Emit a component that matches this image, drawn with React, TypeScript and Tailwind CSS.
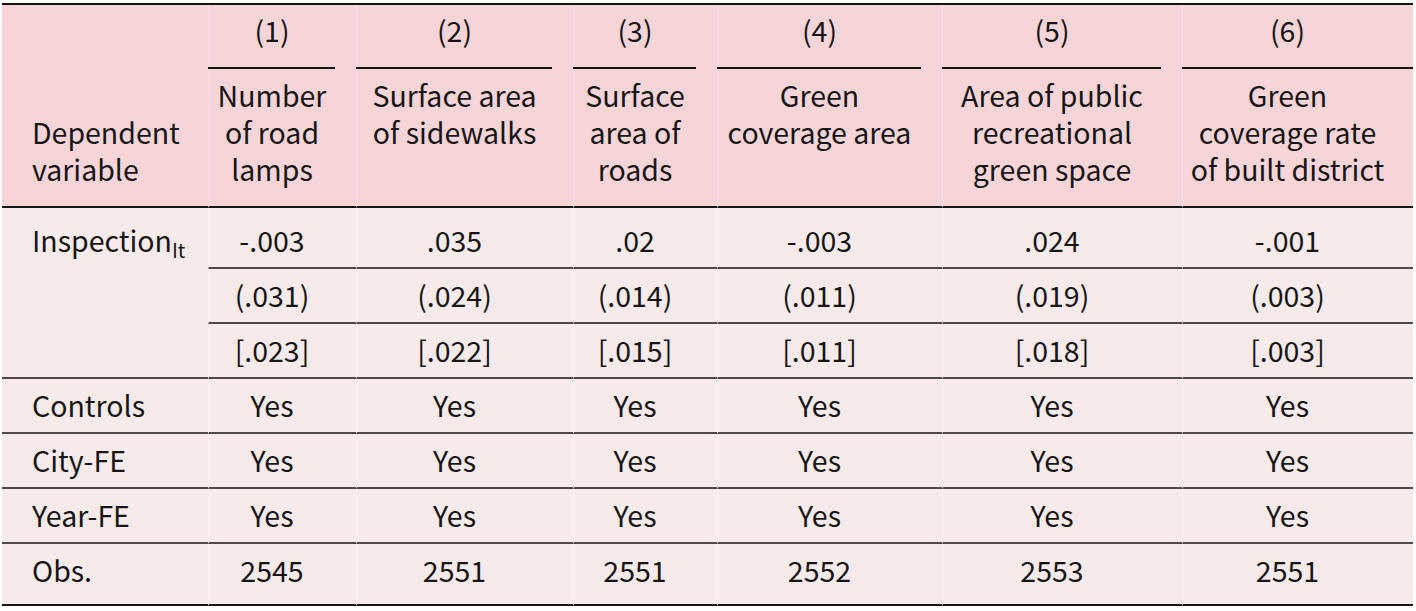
const columns = [
  { num: '(1)', label: ['Number', 'of road', 'lamps'] },
  { num: '(2)', label: ['Surface area', 'of sidewalks'] },
  { num: '(3)', label: ['Surface', 'area of', 'roads'] },
  { num: '(4)', label: ['Green', 'coverage area'] },
  { num: '(5)', label: ['Area of public', 'recreational', 'green space'] },
  { num: '(6)', label: ['Green', 'coverage rate', 'of built district'] },
];

const coefs = ['-.003', '.035', '.02', '-.003', '.024', '-.001'];
const ses = ['(.031)', '(.024)', '(.014)', '(.011)', '(.019)', '(.003)'];
const clustered = ['[.023]', '[.022]', '[.015]', '[.011]', '[.018]', '[.003]'];

const footRows = [
  { label: 'Controls', values: ['Yes', 'Yes', 'Yes', 'Yes', 'Yes', 'Yes'] },
  { label: 'City-FE', values: ['Yes', 'Yes', 'Yes', 'Yes', 'Yes', 'Yes'] },
  { label: 'Year-FE', values: ['Yes', 'Yes', 'Yes', 'Yes', 'Yes', 'Yes'] },
  { label: 'Obs.', values: ['2545', '2551', '2551', '2552', '2553', '2551'] },
];

const widths = ['w-[206px]', 'w-[148px]', 'w-[217px]', 'w-[144px]', 'w-[225px]', 'w-[240px]', 'w-[231px]'];

export default function App() {
  return (
    <div className="min-h-[611px] bg-white pt-[3px] pl-[2px] text-[#161616] font-['Noto_Sans_CJK_SC','Noto_Sans',sans-serif]">
      <table className="w-[1411px] table-fixed border-separate border-spacing-0 text-[28.5px] leading-[37px]">
        <colgroup>
          {widths.map((w) => (
            <col key={w} className={w} />
          ))}
        </colgroup>
        <thead className="bg-[#f6d5d8]">
          <tr>
            <th
              rowSpan={2}
              className="border-t-2 border-b-2 border-[#161616] pl-[30px] pb-[19px] text-left align-bottom font-normal"
            >
              Dependent
              <br />
              variable
            </th>
            {columns.map((col, i) => (
              <th key={col.num} className="border-t-2 border-[#161616] p-0 align-top font-normal">
                <div className="h-[62px] border-l border-[#f9dfe1] pt-[6px] pr-[21px] text-center">{col.num}</div>
                <div
                  className={
                    i === columns.length - 1
                      ? 'h-[2px] bg-[#161616]'
                      : 'mr-[21px] h-[2px] bg-[#161616]'
                  }
                />
              </th>
            ))}
          </tr>
          <tr>
            {columns.map((col) => (
              <th
                key={col.num}
                className="h-[139px] border-b-2 border-l border-[#161616] border-l-[#f9dfe1] pt-[7px] pr-[21px] text-center align-top font-normal"
              >
                {col.label.map((line) => (
                  <div key={line}>{line}</div>
                ))}
              </th>
            ))}
          </tr>
        </thead>
        <tbody className="bg-[#f7eaea]">
          <tr>
            <td rowSpan={3} className="border-b-2 border-[#4f4848] pl-[30px] pt-[13px] align-top">
              Inspection
              <sub className="text-[20px] -bottom-[6px] relative align-baseline">It</sub>
            </td>
            {coefs.map((v, i) => (
              <td
                key={i}
                className="border-b-2 border-l border-[#4f4848] border-l-[#faf0f0] pt-[13px] pr-[21px] pb-[9px] text-center"
              >
                {v}
              </td>
            ))}
          </tr>
          <tr>
            {ses.map((v, i) => (
              <td
                key={i}
                className="border-b-2 border-l border-[#4f4848] border-l-[#faf0f0] pt-[7px] pr-[21px] pb-[9px] text-center"
              >
                {v}
              </td>
            ))}
          </tr>
          <tr>
            {clustered.map((v, i) => (
              <td
                key={i}
                className="border-b-2 border-l border-[#4f4848] border-l-[#faf0f0] pt-[7px] pr-[21px] pb-[9px] text-center"
              >
                {v}
              </td>
            ))}
          </tr>
          {footRows.map((row, r) => {
            const last = r === footRows.length - 1;
            const rowCls = last
              ? 'border-b-2 border-[#161616] pt-[7px] pb-[16px]'
              : 'border-b-2 border-[#4f4848] pt-[7px] pb-[9px]';
            return (
              <tr key={row.label}>
                <td className={`${rowCls} pl-[30px]`}>{row.label}</td>
                {row.values.map((v, i) => (
                  <td key={i} className={`${rowCls} border-l border-l-[#faf0f0] pr-[21px] text-center`}>
                    {v}
                  </td>
                ))}
              </tr>
            );
          })}
        </tbody>
      </table>
    </div>
  );
}
